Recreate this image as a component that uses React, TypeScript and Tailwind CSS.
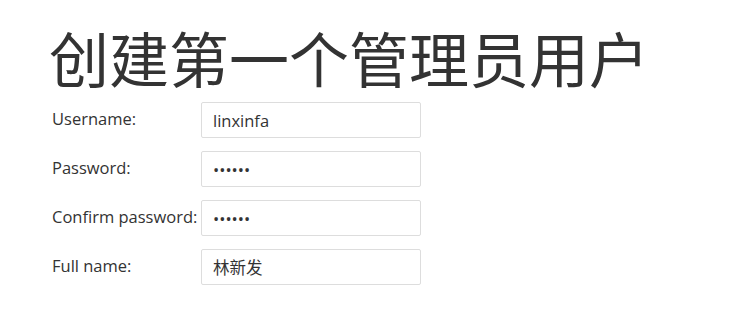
export default function App() {
  const rows = [
    { label: 'Username:', value: 'linxinfa', type: 'text' },
    { label: 'Password:', value: '666666', type: 'password' },
    { label: 'Confirm password:', value: '666666', type: 'password' },
    { label: 'Full name:', value: '林新发', type: 'text' },
  ];

  return (
    <div
      className="min-h-screen bg-white text-[#333333] px-[52px]"
      style={{ fontFamily: '"Open Sans", "Noto Sans CJK SC", sans-serif' }}
    >
      <h1 className="text-[60px] leading-[64px] pt-[28px] -ml-[3px] font-normal whitespace-nowrap">
        创建第一个管理员用户
      </h1>
      <form className="flex flex-col gap-[13px] mt-[10px]">
        {rows.map((r) => (
          <div key={r.label} className="flex items-center">
            <label className="w-[149px] text-[16.5px] -mt-[2px] whitespace-nowrap">{r.label}</label>
            <input
              type={r.type}
              defaultValue={r.value}
              readOnly
              className="w-[220px] h-[36px] border border-[#dddddd] rounded-[2px] px-[11px] text-[16.5px] text-[#333333] outline-none"
              style={{ fontFamily: '"Open Sans", "Noto Sans CJK SC", sans-serif' }}
            />
          </div>
        ))}
      </form>
    </div>
  );
}
